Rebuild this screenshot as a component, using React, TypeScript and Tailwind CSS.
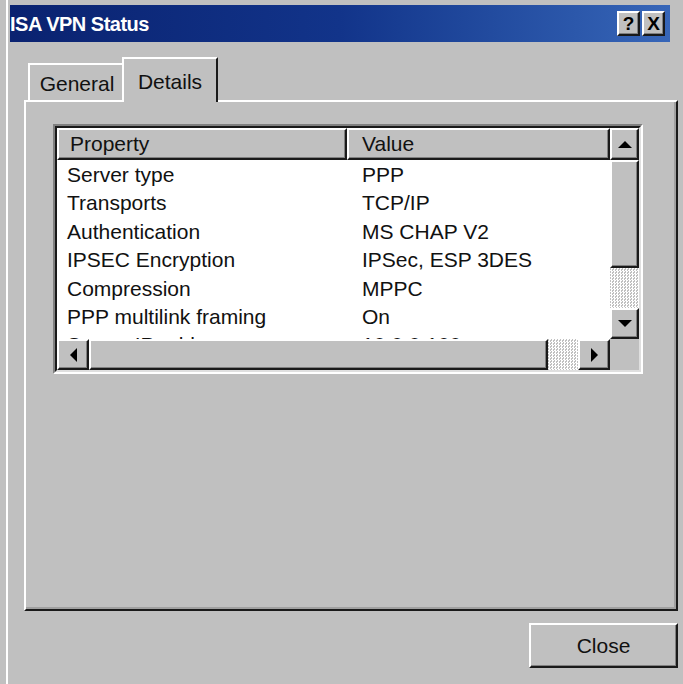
import type { ReactNode } from "react";

// Classic raised 3D edge used by buttons, thumbs and headers.
const raised =
  "border-t-2 border-l-2 border-t-white border-l-white border-r-2 border-b-2 border-r-[#1a1a1a] border-b-[#1a1a1a] shadow-[inset_-1px_-1px_0_#808080] bg-[#c0c0c0]";

const dither =
  "bg-[image:repeating-conic-gradient(#ffffff_0%_25%,#c0c0c0_0%_50%)] bg-[length:3px_3px]";

const rows: [string, string][] = [
  ["Server type", "PPP"],
  ["Transports", "TCP/IP"],
  ["Authentication", "MS CHAP V2"],
  ["IPSEC Encryption", "IPSec, ESP 3DES"],
  ["Compression", "MPPC"],
  ["PPP multilink framing", "On"],
  ["Server IP address", "10.0.0.100"],
];

function Arrow({ dir }: { dir: "up" | "down" | "left" | "right" }) {
  const pts = {
    up: "0,7 7,0 14,7",
    down: "0,0 14,0 7,7",
    left: "7,0 7,14 0,7",
    right: "0,0 0,14 7,7",
  }[dir];
  const vertical = dir === "up" || dir === "down";
  return (
    <svg
      width={vertical ? 14 : 7}
      height={vertical ? 7 : 14}
      viewBox={vertical ? "0 0 14 7" : "0 0 7 14"}
    >
      <polygon points={pts} fill="#000" />
    </svg>
  );
}

function ScrollButton({ className, children }: { className: string; children: ReactNode }) {
  return <div className={`${raised} ${className} flex items-center justify-center`}>{children}</div>;
}

function TitleButton({ children }: { children: ReactNode }) {
  return (
    <div
      className={`${raised} w-[23px] h-[25px] flex items-center justify-center text-[19px] font-bold leading-none text-black`}
    >
      {children}
    </div>
  );
}

export default function App() {
  return (
    <div className="w-[683px] h-[684px] overflow-hidden bg-[#c0c0c0] font-['Liberation_Sans',Arial,sans-serif] text-[#111]">
      <div className="ml-[6px] h-full border-l-2 border-l-white pl-[2px] pt-[5px]">
        {/* title bar */}
        <div className="flex h-[37px] w-[660px] items-center bg-gradient-to-r from-[#0a2270] via-[#12348a] to-[#3766b8] pr-[5px]">
          <span className="text-[20px] font-bold tracking-[-0.5px] text-white">ISA VPN Status</span>
          <div className="ml-auto flex gap-[2px]">
            <TitleButton>?</TitleButton>
            <TitleButton>X</TitleButton>
          </div>
        </div>

        {/* tabs */}
        <div className="mt-[15px] flex h-[43px] items-end pl-[18px]">
          <div className="flex h-[37px] w-[96px] items-center justify-center border-l-2 border-t-2 border-l-white border-t-white pt-[3px] text-[21px]">
            General
          </div>
          <div className="relative z-10 -mb-[2px] -ml-[2px] flex h-[45px] w-[96px] items-start justify-center border-l-2 border-r-2 border-t-2 border-l-white border-r-[#1a1a1a] border-t-white bg-[#c0c0c0] pt-[7px] text-[21px]">
            Details
          </div>
        </div>

        {/* tab page */}
        <div className="ml-[14px] h-[511px] w-[654px] border-2 border-l-white border-t-white border-r-[#1a1a1a] border-b-[#1a1a1a] pl-[27px] pt-[22px] shadow-[inset_-2px_-2px_0_#a0a0a0]">
          {/* list view, sunken */}
          <div className="h-[250px] w-[590px] border-2 border-l-[#808080] border-t-[#808080] border-r-white border-b-white">
            <div className="flex h-full w-full flex-col border-2 border-l-[#1a1a1a] border-t-[#1a1a1a] border-r-[#dfdfdf] border-b-[#dfdfdf] bg-white">
              <div className="flex h-[211px]">
                <div className="w-[553px]">
                  <div className="flex h-[32px] text-[21px]">
                    <div className={`${raised} w-[290px] pl-[11px] leading-[28px]`}>Property</div>
                    <div className={`${raised} flex-1 pl-[13px] leading-[28px]`}>Value</div>
                  </div>
                  <div className="h-[179px] overflow-hidden text-[21px]">
                    {rows.map(([k, v]) => (
                      <div key={k} className="flex h-[28.4px] leading-[29px]">
                        <div className="w-[290px] pl-[10px]">{k}</div>
                        <div className="pl-[15px]">{v}</div>
                      </div>
                    ))}
                  </div>
                </div>
                <div className="flex w-[29px] flex-col">
                  <ScrollButton className="h-[32px]">
                    <Arrow dir="up" />
                  </ScrollButton>
                  <div className={`${raised} h-[108px]`} />
                  <div className={`h-[40px] ${dither}`} />
                  <ScrollButton className="h-[31px]">
                    <Arrow dir="down" />
                  </ScrollButton>
                </div>
              </div>
              <div className="flex h-[31px] bg-[#c0c0c0]">
                <ScrollButton className="w-[32px]">
                  <Arrow dir="left" />
                </ScrollButton>
                <div className={`${raised} w-[459px]`} />
                <div className={`w-[30px] ${dither}`} />
                <ScrollButton className="w-[32px]">
                  <Arrow dir="right" />
                </ScrollButton>
                <div className="flex-1 bg-[#c0c0c0]" />
              </div>
            </div>
          </div>
        </div>

        {/* footer */}
        <div className="mt-[12px] flex w-[668px] justify-end">
          <div
            className={`${raised} flex h-[45px] w-[149px] items-center justify-center text-[21px]`}
          >
            Close
          </div>
        </div>
      </div>
    </div>
  );
}
